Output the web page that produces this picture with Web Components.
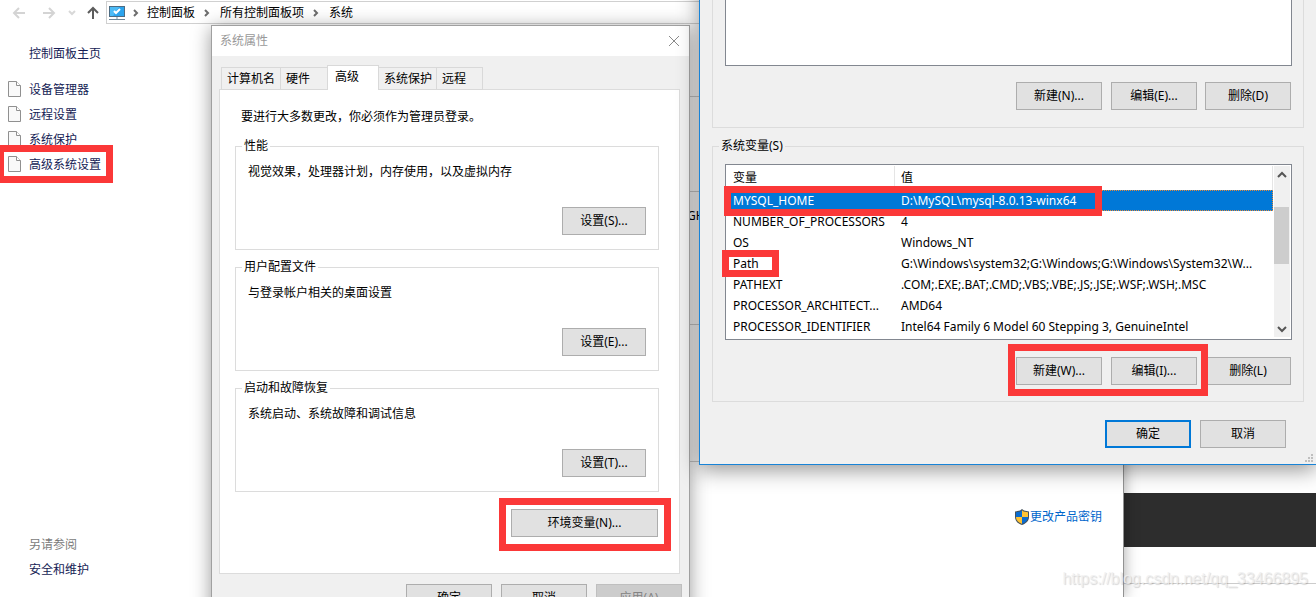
<!DOCTYPE html>
<html lang="zh-CN">
<head>
<meta charset="utf-8">
<title>系统属性</title>
<style>
  html, body { margin: 0; height: 100%; }
  body { font: 12px/16px "Noto Sans", "Noto Sans CJK SC", sans-serif; color: #000; background: #fff; overflow: hidden; }
</style>
</head>
<body>
<desk-top></desk-top>

<script>
const define = (name, html) => customElements.define(name, class extends HTMLElement {
  constructor() {
    super();
    const t = document.createElement('template');
    t.innerHTML = html;
    this.attachShadow({ mode: 'open' }).append(t.content.cloneNode(true));
  }
  connectedCallback() {
    for (const el of this.shadowRoot.querySelectorAll('[data-attr]')) {
      el.textContent = this.getAttribute(el.dataset.attr) || '';
    }
    if (this.hasAttribute('disabled')) this.shadowRoot.querySelector('button').disabled = true;
  }
});

/* Red highlight frame laid over the content it points at */
define('mark-box', `
<style>
  :host { display: block; position: absolute; z-index: 5; box-sizing: border-box; border: 7px solid #fb3838; pointer-events: none; }
</style>`);

define('push-button', `
<style>
  :host { display: block; width: 86px; }
  button { display: block; box-sizing: border-box; width: 100%; height: 28px; margin: 0; padding: 0; border: 1px solid #adadad; background: #e1e1e1; font: inherit; color: #000; }
  button:disabled { background: #ccc; border-color: #bfbfbf; color: #838383; }
  :host([primary]) button { border: 2px solid #0078d7; }
</style>
<button type="button"><slot></slot></button>`);

define('group-box', `
<style>
  :host { display: block; }
  fieldset { margin: 0; padding: var(--group-padding, 10px 12px 14px); min-width: 0; border: 1px solid #dcdcdc; }
  legend { margin-left: -6px; padding: 0 2px; height: 16px; }
</style>
<fieldset><legend data-attr="label"></legend><slot></slot></fieldset>`);

/* Explorer window */
const pageIcon = `<svg width="13" height="16" viewBox="0 0 13 16" aria-hidden="true"><path d="M.5 .5h8l4 4v11h-12z" fill="#f9f9f9" stroke="#909090"/><path d="M8.500 .5v4h4" fill="#fff" stroke="#909090"/></svg>`;

define('control-nav', `
<style>
  :host { display: flex; flex-direction: column; box-sizing: border-box; width: 212px; padding: 22px 0 19px; }
  a { color: #151c55; text-decoration: none; }
  .home { margin: 0 0 19px 29px; }
  ul { list-style: none; margin: 0; padding: 0 0 0 8px; }
  li { position: relative; width: max-content; margin-bottom: 7px; }
  li a { display: flex; align-items: flex-start; gap: 8px; height: 18px; line-height: 18px; }
  .also { margin: auto 0 0 29px; display: grid; gap: 9px; }
  .also span { color: #7b7b7b; }
  mark-box { inset: -11px -12px -9px -11px; }
</style>
<a class="home" href="#">控制面板主页</a>
<ul>
  <li><a href="#">${pageIcon}设备管理器</a></li>
  <li><a href="#">${pageIcon}远程设置</a></li>
  <li><a href="#">${pageIcon}系统保护</a></li>
  <li><a href="#">${pageIcon}高级系统设置</a><mark-box></mark-box></li>
</ul>
<div class="also"><span>另请参阅</span><a href="#">安全和维护</a></div>`);

define('address-bar', `
<style>
  :host { display: flex; height: 24px; background: #fff; }
  .nav { display: flex; align-items: center; width: 106px; }
  .nav button { border: 0; padding: 0; margin: 0; background: none; height: 24px; }
  svg { display: block; }
  .path { flex: 1; box-sizing: border-box; margin-top: 1px; height: 23px; border: 1px solid #d0d0d0; border-right: 0; display: flex; align-items: center; padding-left: 2px; }
  .path a { color: #000; text-decoration: none; }
  .path .sep { width: 25px; }
  .path .sep.first { width: 21px; }
</style>
<div class="nav">
  <button type="button" aria-label="后退"><svg width="34" height="24"><path d="M25 13H14M19 8l-5 5 5 5" fill="none" stroke="#d4d4d4" stroke-width="2"/></svg></button>
  <button type="button" aria-label="前进"><svg width="30" height="24"><path d="M9 13h11M15 8l5 5-5 5" fill="none" stroke="#d4d4d4" stroke-width="2"/></svg></button>
  <button type="button" aria-label="最近"><svg width="18" height="24"><path d="M5 11l3 3 3-3" fill="none" stroke="#d8d8d8" stroke-width="2"/></svg></button>
  <button type="button" aria-label="上移"><svg width="24" height="24"><path d="M11 19V9M6 13l5-5 5 5" fill="none" stroke="#5c5c5c" stroke-width="2"/></svg></button>
</div>
<div class="path">
  <svg width="17" height="16" aria-hidden="true"><path d="M0 1h16v11H0z" fill="#4d6c83"/><path d="M1 2h14v9H1z" fill="#2ba4ee"/><path d="M1 2h9L4 11H1z" fill="#4dbbf6"/><path d="M5 6l2 2 4-4" fill="none" stroke="#fff" stroke-width="2"/><path d="M7 12h2v2H7z" fill="#b8c7cf"/><path d="M0 14h16v1H0z" fill="#6d8799"/></svg>
  <svg class="sep first" height="20"><path d="M8 7l3 3-3 3" fill="none" stroke="#6d6d6d" stroke-width="2"/></svg>
  <a href="#">控制面板</a>
  <svg class="sep" height="20"><path d="M10 7l3 3-3 3" fill="none" stroke="#6d6d6d" stroke-width="2"/></svg>
  <a href="#">所有控制面板项</a>
  <svg class="sep" height="20"><path d="M10 7l3 3-3 3" fill="none" stroke="#6d6d6d" stroke-width="2"/></svg>
  <a href="#">系统</a>
</div>`);

define('explorer-window', `
<style>
  :host { display: flex; flex-direction: column; box-sizing: border-box; background: #fff; border-right: 1px solid #929292; box-shadow: 0 0 14px rgba(0,0,0,.35); }
  .body { flex: 1; display: flex; }
  main { flex: 1; display: flex; flex-direction: column; }
  section { box-sizing: border-box; border-bottom: 1px solid #ccc; }
  .a { height: 73px; } .b { height: 95px; } .c { height: 133px; padding: 16px 0 0 475px; } .d { height: 137px; }
  .key { margin: 47px 21px 0 auto; display: flex; align-items: flex-start; gap: 1px; color: #0066cc; text-decoration: none; }
</style>
<address-bar></address-bar>
<div class="body">
  <control-nav></control-nav>
  <main>
    <section class="a"></section><section class="b"></section><section class="c">GH</section><section class="d"></section>
    <a class="key" href="#"><svg width="14" height="16" viewBox="0 0 14 16" aria-hidden="true"><path d="M7 0l2 1.500 5 1V8c0 4-3 6.500-7 8-4-1.500-7-4-7-8V2.500l5-1z" fill="#45525c"/><path d="M7 1.200V8H1V3.300l4.500-.9z" fill="#0a6cd0"/><path d="M7 1.200V8h6V3.300l-4.500-.9z" fill="#ffc334"/><path d="M1 8h6v6.900C3.500 13.500 1 11.500 1 8z" fill="#ffc334"/><path d="M13 8H7v6.900c3.500-1.400 6-3.400 6-6.900z" fill="#0a6cd0"/></svg>更改产品密钥</a>
  </main>
</div>`);

/* System properties dialog */
define('tab-strip', `
<style>
  :host { display: flex; align-items: flex-end; height: 25px; padding-left: 1px; position: relative; }
  button { box-sizing: border-box; height: 23px; margin: 0; padding: 0 0 0 5px; text-align: left; border: 1px solid #d9d9d9; border-left: 0; background: #f0f0f0; font: inherit; color: #000; }
  button:first-of-type { border-left: 1px solid #d9d9d9; }
  button[aria-selected=true] { height: 25px; padding: 0 0 3px 7px; background: #fff; border-bottom: 0; border-left: 1px solid #d9d9d9; margin-left: -1px; }
</style>
<button type="button" role="tab" style="width:60px">计算机名</button><button type="button" role="tab" style="width:47px">硬件</button><button type="button" role="tab" aria-selected="true" style="width:52px">高级</button><button type="button" role="tab" style="width:58px">系统保护</button><button type="button" role="tab" style="width:46px">远程</button>`);

define('setting-group', `
<style>
  :host { display: block; }
  fieldset { margin: 0; padding: 10px 12px 14px; min-width: 0; border: 1px solid #dcdcdc; }
  legend { margin-left: -6px; padding: 0 2px; height: 16px; }
  p { margin: 0 0 27px; }
  push-button { width: 84px; margin-left: auto; }
</style>
<fieldset><legend data-attr="label"></legend><p><slot></slot></p><push-button><span data-attr="action"></span></push-button></fieldset>`);

define('system-properties', `
<style>
  :host { display: block; box-sizing: border-box; background: #f0f0f0; border: 1px solid #a0a0a0; box-shadow: 0 3px 18px rgba(0,0,0,.4); }
  header { display: flex; align-items: center; justify-content: space-between; height: 30px; padding: 0 9px 0 8px; background: #fff; color: #999; }
  header button { border: 0; padding: 0; margin: 0; background: none; width: 12px; height: 12px; }
  svg { display: block; }
  .content { padding: 9px 9px 0 7px; }
  tab-strip { margin: 0 0 -1px 1px; }
  .pane { border: 1px solid #dcdcdc; background: #fff; padding: 19px 20px 36px 15px; }
  p { margin: 0 0 13px 6px; }
  .groups { display: grid; gap: 9px; }
  .env { position: relative; width: 147px; margin: 17px 1px 0 auto; }
  .env push-button { width: 100%; }
  mark-box { inset: -11px -13px -14px -12px; }
  footer { display: flex; justify-content: flex-end; gap: 9px; padding: 10px 7px 12px; }
</style>
<header><span>系统属性</span><button type="button" aria-label="关闭"><svg width="12" height="12"><path d="M1 1l10 10M11 1L1 11" stroke="#8a8a8a"/></svg></button></header>
<div class="content">
  <tab-strip></tab-strip>
  <div class="pane">
    <p>要进行大多数更改，你必须作为管理员登录。</p>
    <div class="groups">
      <setting-group label="性能" action="设置(S)...">视觉效果，处理器计划，内存使用，以及虚拟内存</setting-group>
      <setting-group label="用户配置文件" action="设置(E)...">与登录帐户相关的桌面设置</setting-group>
      <setting-group label="启动和故障恢复" action="设置(T)...">系统启动、系统故障和调试信息</setting-group>
    </div>
    <div class="env"><push-button>环境变量(N)...</push-button><mark-box></mark-box></div>
  </div>
</div>
<footer><push-button>确定</push-button><push-button>取消</push-button><push-button disabled>应用(A)</push-button></footer>`);

/* Environment variables dialog */
define('variable-list', `
<style>
  :host { display: flex; box-sizing: border-box; border: 1px solid #828790; background: #fff; padding: 1px 1px 2px 2px; }
  table { flex: 1; width: 0; table-layout: fixed; border-collapse: separate; border-spacing: 0; }
  th, td { box-sizing: border-box; height: 21px; padding: 0 0 0 5px; text-align: left; font-weight: normal; white-space: nowrap; position: relative; }
  th { height: 24px; border-right: 1px solid #e5e5e5; }
  th:first-child { width: 167px; }
  th + th, td + td { padding-left: 6px; }
  tr.on td { background: #0078d7; color: #fff; border: 1px dotted #e58a3c; border-width: 1px 0; }
  tr.on td:last-child { border-right-width: 1px; }
  .bar { width: 16px; margin-left: 1px; background: #f0f0f0; display: flex; flex-direction: column; }
  .thumb { width: 15px; height: 57px; margin-top: 23px; background: #cdcdcd; }
  svg { display: block; }
  .down { margin-top: auto; }
  .home { left: -4px; top: -5px; width: 378px; height: 30px; }
  .pathmark { left: -6px; top: -3px; width: 57px; height: 27px; }
</style>
<table>
  <thead><tr><th>变量</th><th>值</th></tr></thead>
  <tbody>
    <tr class="on"><td>MYSQL_HOME<mark-box class="home"></mark-box></td><td>D:\\MySQL\\mysql-8.0.13-winx64</td></tr>
    <tr><td>NUMBER_OF_PROCESSORS</td><td>4</td></tr>
    <tr><td>OS</td><td>Windows_NT</td></tr>
    <tr><td>Path<mark-box class="pathmark"></mark-box></td><td>G:\\Windows\\system32;G:\\Windows;G:\\Windows\\System32\\W...</td></tr>
    <tr><td>PATHEXT</td><td>.COM;.EXE;.BAT;.CMD;.VBS;.VBE;.JS;.JSE;.WSF;.WSH;.MSC</td></tr>
    <tr><td>PROCESSOR_ARCHITECT...</td><td>AMD64</td></tr>
    <tr><td>PROCESSOR_IDENTIFIER</td><td>Intel64 Family 6 Model 60 Stepping 3, GenuineIntel</td></tr>
  </tbody>
</table>
<div class="bar">
  <svg width="16" height="18"><path d="M4 11l4-4 4 4" fill="none" stroke="#555" stroke-width="2"/></svg>
  <div class="thumb"></div>
  <svg class="down" width="16" height="16"><path d="M4 6l4 4 4-4" fill="none" stroke="#555" stroke-width="2"/></svg>
</div>`);

define('environment-dialog', `
<style>
  :host { display: block; box-sizing: border-box; min-width: 480px; padding: 0 12px 16px; background: #f0f0f0; border: solid #1883d7; border-width: 0 0 1px 1px; box-shadow: 0 5px 20px rgba(0,0,0,.42); }
  .user { border: 1px solid #dcdcdc; border-top: 0; padding: 10px 11px 17px 12px; }
  .list { box-sizing: border-box; height: 76px; border: 1px solid #828790; background: #fff; }
  .row { display: flex; justify-content: flex-end; gap: 8px; padding-right: 1px; margin-top: 16px; }
  group-box { --group-padding: 10px 11px 16px 12px; margin-top: 10px; }
  group-box .row { margin-top: 17px; }
  .pair { display: flex; gap: 9px; position: relative; }
  .pair mark-box { inset: -13px -11px -11px -8px; }
  footer { display: flex; justify-content: flex-end; gap: 9px; padding: 18px 18px 0; }
  .grip { position: absolute; right: 3px; bottom: 2px; }
</style>
<div class="user">
  <div class="list"></div>
  <div class="row"><div class="pair"><push-button>新建(N)...</push-button><push-button>编辑(E)...</push-button></div><push-button>删除(D)</push-button></div>
</div>
<group-box label="系统变量(S)">
  <variable-list></variable-list>
  <div class="row"><div class="pair"><push-button>新建(W)...</push-button><push-button>编辑(I)...</push-button><mark-box></mark-box></div><push-button>删除(L)</push-button></div>
</group-box>
<footer><push-button primary>确定</push-button><push-button>取消</push-button></footer>
<svg class="grip" width="8" height="8" aria-hidden="true"><path d="M6 0h2v2H6zM3 3h2v2H3zM6 3h2v2H6zM0 6h2v2H0zM3 6h2v2H3zM6 6h2v2H6z" fill="#bfbfbf"/></svg>`);

define('back-page', `
<style>
  :host { display: flex; flex-direction: column; background: #fff; }
  .band { margin-top: 493px; height: 54px; background: #2d2d2d; }
  .rule { margin-top: 36px; height: 1px; background: #ccc; }
</style>
<div class="band"></div><div class="rule"></div>`);

define('desk-top', `
<style>
  :host { display: block; position: relative; height: 100vh; overflow: hidden; }
  back-page { position: absolute; inset: 0; }
  explorer-window { position: absolute; inset: 0 192px 0 0; }
  system-properties { position: absolute; left: 211px; top: 25px; width: 479px; }
  environment-dialog { position: absolute; left: 699px; right: 0; top: -20px; }
  .watermark { position: absolute; right: 8px; bottom: 8px; font: 16px/20px "Liberation Sans", sans-serif; color: rgba(240,240,240,.8); text-shadow: 1px 1px 1px rgba(0,0,0,.16); }
</style>
<back-page></back-page>
<explorer-window></explorer-window>
<system-properties></system-properties>
<environment-dialog></environment-dialog>
<span class="watermark">https://blog.csdn.net/qq_33466895</span>`);
</script>
</body>
</html>
